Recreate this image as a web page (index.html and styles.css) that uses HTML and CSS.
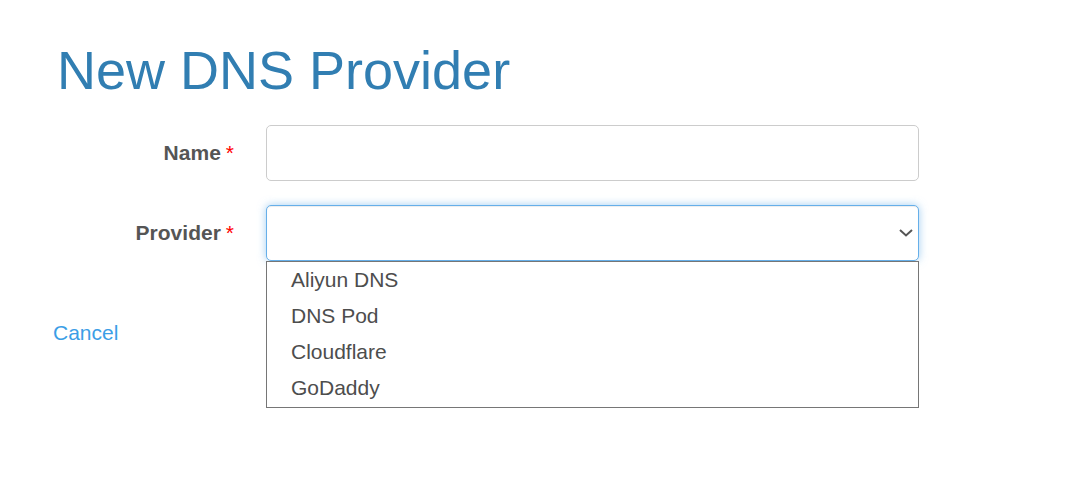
FILE: index.html
```html
<!DOCTYPE html>
<html>
<head>
<meta charset="utf-8">
<title>New DNS Provider</title>
<link rel="stylesheet" href="styles.css">
</head>
<body>
<div class="page">
  <h1 class="title">New DNS Provider</h1>
  <form class="form">
    <div class="row">
      <label class="label">Name<span class="req">*</span></label>
      <div class="input"></div>
    </div>
    <div class="row">
      <label class="label">Provider<span class="req">*</span></label>
      <div class="select-wrap">
        <div class="select">
          <svg class="chevron" width="14" height="8" viewBox="0 0 14 8"><polyline points="1,1 7,6.5 13,1" fill="none" stroke="#555" stroke-width="2"/></svg>
        </div>
        <ul class="dropdown">
          <li>Aliyun DNS</li>
          <li>DNS Pod</li>
          <li>Cloudflare</li>
          <li>GoDaddy</li>
        </ul>
      </div>
    </div>
    <div class="actions">
      <a class="cancel" href="#">Cancel</a>
    </div>
  </form>
</div>
</body>
</html>
```

FILE: styles.css
```css
html, body {
  margin: 0;
  padding: 0;
  background: #fff;
}
body {
  font-family: "Liberation Sans", Arial, sans-serif;
  font-size: 21px;
  color: #555;
  min-height: 478px;
}
.page {
  padding: 40px 0 0 53px;
  min-height: 438px;
}
.title {
  margin: 0;
  font-size: 54px;
  font-weight: normal;
  line-height: 60px;
  color: #317eb2;
  padding-left: 4px;
}
.form {
  margin-top: 25px;
  display: flex;
  flex-direction: column;
  gap: 24px;
  width: 866px;
}
.row {
  display: grid;
  grid-template-columns: 213px 653px;
  align-items: center;
}
.label {
  justify-self: end;
  padding-right: 32px;
  font-weight: bold;
  line-height: 30px;
  color: #555;
}
.req {
  color: #f00;
  margin-left: 5px;
  font-weight: normal;
}
.input {
  height: 54px;
  border: 1px solid #ccc;
  border-radius: 5px;
  background: #fff;
}
.select-wrap {
  position: relative;
}
.select {
  height: 54px;
  border: 1px solid #66afe9;
  border-radius: 5px;
  background: #fff;
  box-shadow: inset 0 1px 1px rgba(0,0,0,.075), 0 0 8px rgba(102,175,233,.6);
  display: flex;
  align-items: center;
  justify-content: flex-end;
  padding-right: 5px;
}
.chevron {
  display: block;
}
.dropdown {
  position: absolute;
  top: 56px;
  left: 0;
  right: 0;
  margin: 0;
  padding: 0;
  list-style: none;
  background: #fff;
  border: 1px solid #767676;
  z-index: 2;
}
.dropdown li {
  height: 36px;
  line-height: 36px;
  padding-left: 24px;
  color: #4d4d4d;
}
.dropdown li:last-child {
  height: 37px;
}
.actions {
  margin-top: 33px;
  line-height: 30px;
}
.cancel {
  color: #3b9ee6;
  text-decoration: none;
}
```
